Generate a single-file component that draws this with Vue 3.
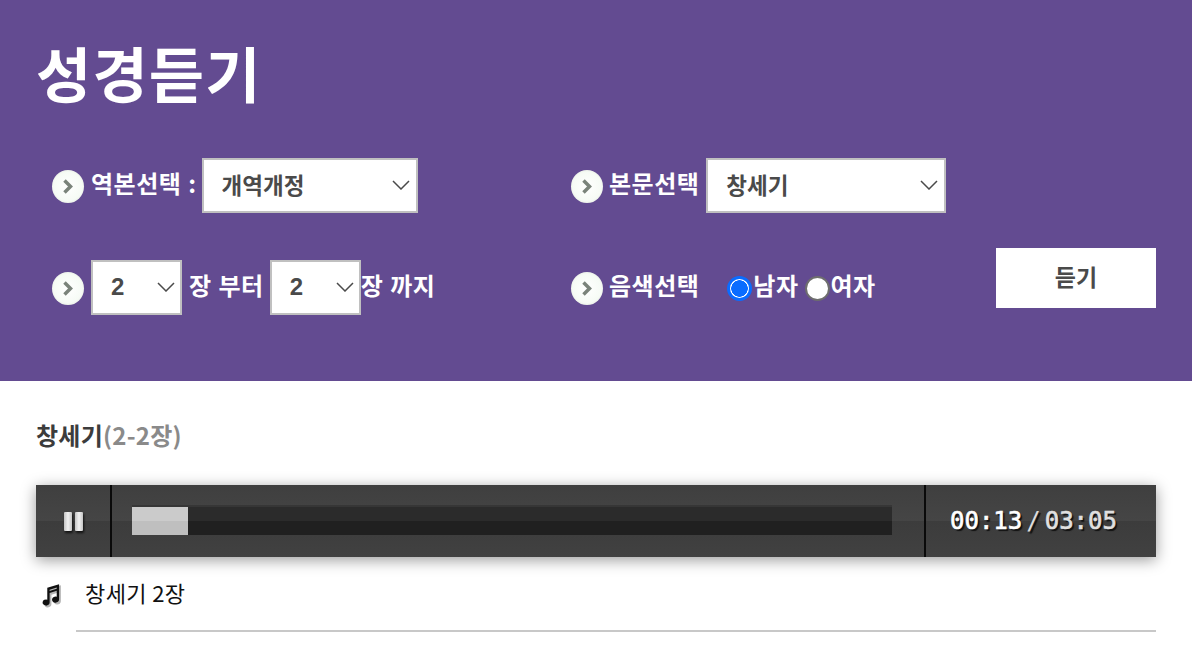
<template>
  <div class="page">
    <section class="search">
      <h1 class="title">성경듣기</h1>
      <div class="form">
        <div class="col col-left">
          <div class="row">
            <span class="bullet"><svg viewBox="0 0 32 32"><path d="M12.500 10l6 6-6 6" /></svg></span>
            <label class="label">역본선택 :</label>
            <div class="select-box version">
              <select><option>개역개정</option></select>
              <svg class="chev" viewBox="0 0 18 10"><path d="M1 1l8 8 8-8" /></svg>
            </div>
          </div>
          <div class="row">
            <span class="bullet"><svg viewBox="0 0 32 32"><path d="M12.500 10l6 6-6 6" /></svg></span>
            <div class="select-box chapter">
              <select><option>2</option></select>
              <svg class="chev" viewBox="0 0 18 10"><path d="M1 1l8 8 8-8" /></svg>
            </div>
            <span class="label from">장 부터</span>
            <div class="select-box chapter">
              <select><option>2</option></select>
              <svg class="chev" viewBox="0 0 18 10"><path d="M1 1l8 8 8-8" /></svg>
            </div>
            <span class="label to">장 까지</span>
          </div>
        </div>
        <div class="col col-right">
          <div class="row">
            <span class="bullet"><svg viewBox="0 0 32 32"><path d="M12.500 10l6 6-6 6" /></svg></span>
            <label class="label">본문선택</label>
            <div class="select-box book">
              <select><option>창세기</option></select>
              <svg class="chev" viewBox="0 0 18 10"><path d="M1 1l8 8 8-8" /></svg>
            </div>
          </div>
          <div class="row">
            <span class="bullet"><svg viewBox="0 0 32 32"><path d="M12.500 10l6 6-6 6" /></svg></span>
            <span class="label">음색선택</span>
            <div class="voices">
              <label v-for="v in voices" :key="v" class="voice">
                <input v-model="voice" type="radio" name="voice" :value="v" />
                <span class="label">{{ v }}</span>
              </label>
            </div>
          </div>
        </div>
        <button class="listen" type="button">듣기</button>
      </div>
    </section>

    <section class="result">
      <h2 class="book-title">창세기<span>(2-2장)</span></h2>
      <div class="player">
        <div class="play-cell">
          <span class="pause"><i></i><i></i></span>
        </div>
        <div class="track-cell">
          <div class="track"><div class="played" :style="{ width: progress + 'px' }"></div></div>
        </div>
        <div class="time-cell">
          <span class="now">00:13</span>
          <span class="slash">/</span>
          <span class="total">03:05</span>
        </div>
      </div>
      <div class="song">
        <svg class="note" viewBox="0 0 20 22">
          <path class="note-shadow" d="M7.500 5l10-3v13.500a3 2.600 0 1 1-2-2.400V8l-6 2v8a3 2.600 0 1 1-2-2.400z" />
          <path d="M6 4l10-3v13a3 2.600 0 1 1-2-2.400V6.500l-6 2v8a3 2.600 0 1 1-2-2.400zM8 5.800v1l6-2v-1z" fill-rule="evenodd" />
        </svg>
        <span>창세기 2장</span>
      </div>
      <div class="song-line"></div>
    </section>
  </div>
</template>

<script setup>
import { ref } from 'vue'

const voices = ['남자', '여자']
const voice = ref('남자')
const progress = 56
</script>

<style>
html,
body {
  margin: 0;
  background: #fff;
}
</style>

<style scoped>
.page {
  font-family: "Noto Sans CJK KR", "Noto Sans", sans-serif;
  color: #000;
  height: 670px;
  overflow: hidden;
}

.search {
  box-sizing: border-box;
  height: 381px;
  background: #634b91;
  padding: 28px 36px 0;
}

.title {
  margin: 0;
  height: 88px;
  font-size: 60px;
  line-height: 88px;
  font-weight: 700;
  letter-spacing: 1.200px;
  color: #fff;
}

.form {
  display: flex;
  position: relative;
  margin-top: 42px;
  padding-left: 15px;
}

.col {
  display: flex;
  flex-direction: column;
  gap: 47px;
}

.col-left {
  width: 519px;
}

.row {
  display: flex;
  align-items: center;
  height: 55px;
}

.bullet {
  width: 32px;
  height: 33px;
  margin: 1px 7px 0 1px;
  flex: none;
  border-radius: 50%;
  background: radial-gradient(circle, #fff 0%, #f6fbf5 62%, #e2e6dd 84%, #a99fc0 100%);
}

.col-right .bullet {
  margin-right: 6px;
}

.bullet svg {
  display: block;
  width: 32px;
  height: 33px;
  filter: blur(0.5px);
}

.bullet path {
  fill: none;
  stroke: #7a837a;
  stroke-width: 3.500;
}

.label {
  font-size: 24px;
  font-weight: 700;
  color: #fff;
  white-space: nowrap;
  letter-spacing: 0.5px;
  word-spacing: 1px;
  margin-top: -6px;
}

.select-box {
  position: relative;
  box-sizing: border-box;
  height: 55px;
  margin-left: 7px;
  background: #fff;
  border: 2px solid #c0c0c0;
}

.select-box select {
  appearance: none;
  display: block;
  width: 100%;
  height: 100%;
  border: 0;
  background: transparent;
  padding: 0 0 3px 18px;
  font: 700 22.500px "Noto Sans CJK KR", sans-serif;
  color: #4a4a4a;
}

.chev {
  position: absolute;
  right: 6px;
  top: 20px;
  width: 18px;
  height: 10px;
  pointer-events: none;
}

.chev path {
  fill: none;
  stroke: #4a4a4a;
  stroke-width: 1.500;
}

.version {
  width: 216px;
  margin-left: 5px;
}

.book {
  width: 240px;
}

.chapter {
  width: 91px;
  margin-left: 0;
}

.chapter .chev {
  right: 5px;
}

.chapter select {
  padding: 0 0 2px 18px;
  font: 700 24px "Liberation Sans", sans-serif;
}

.from {
  margin: -6px 6px 0 7px;
}

.voices {
  display: flex;
  align-items: center;
  margin-left: 28px;
}

.voice {
  display: flex;
  align-items: center;
  margin-right: 6px;
}

.voice input {
  appearance: none;
  box-sizing: border-box;
  width: 25px;
  height: 25px;
  margin: 1px 1px 0 0;
  border-radius: 50%;
  border: 2px solid #6e6e6e;
  background: #fff;
}

.voice input:checked {
  border: 3px solid #0a6cff;
  background: radial-gradient(circle, #0a6cff 0, #0a6cff 8px, #fff 8.500px);
}

.listen {
  position: absolute;
  left: 960px;
  top: 90px;
  width: 160px;
  height: 60px;
  border: 0;
  padding: 0 0 4px;
  background: #fff;
  font: 700 23px "Noto Sans CJK KR", sans-serif;
  color: #4a4a4a;
}

.result {
  padding: 0 36px;
}

.book-title {
  margin: 0;
  height: 104px;
  padding-top: 36px;
  box-sizing: border-box;
  font-size: 24px;
  line-height: 36px;
  font-weight: 700;
  color: #3c3c3c;
  letter-spacing: 0.250px;
}

.book-title span {
  color: #8a8a8a;
}

.player {
  display: flex;
  height: 72px;
  background: linear-gradient(#3f3f3f 0, #454545 50%, #3c3c3c 50%, #414141 100%);
  box-shadow: 0 3px 14px rgba(0, 0, 0, 0.4);
}

.play-cell {
  width: 74px;
  display: flex;
  align-items: center;
  justify-content: center;
  border-right: 2px solid #0a0a0a;
}

.pause {
  display: flex;
  gap: 3px;
  filter: drop-shadow(1px 2px 1px rgba(0, 0, 0, 0.7));
}

.pause i {
  display: block;
  width: 8px;
  height: 19px;
  border-radius: 1px;
  background: linear-gradient(90deg, #c4c4c4, #f2f2f2 50%, #c4c4c4);
}

.track-cell {
  box-sizing: border-box;
  width: 814px;
  padding: 22px 0 0 20px;
  border-right: 2px solid #0a0a0a;
}

.track {
  width: 760px;
  height: 28px;
  background: linear-gradient(#2b2b2b 50%, #202020 50%);
  box-shadow: 0 -2px 0 #363636;
}

.played {
  height: 28px;
  background: linear-gradient(#cbcbcb 50%, #bfbfbf 50%);
}

.time-cell {
  flex: 1;
  display: flex;
  align-items: center;
  padding-left: 24px;
  font-family: "DejaVu Sans Mono", monospace;
  font-size: 24px;
  font-weight: 400;
  -webkit-text-stroke: 0.6px currentColor;
  color: #fff;
  text-shadow: 2px 2px 1px #111;
}

.slash {
  margin: 0 4px;
  color: #ddd;
  -webkit-text-stroke: 0;
}

.total {
  color: #e0e0e0;
}

.song {
  display: flex;
  align-items: center;
  height: 73px;
  font-size: 22px;
  font-weight: 400;
  color: #111;
  letter-spacing: 0.4px;
}

.song > span {
  margin-top: -4px;
}

.note {
  width: 24px;
  height: 26px;
  margin: 4px 21px 0 4px;
  flex: none;
}

.note path {
  fill: #111;
}

.note .note-shadow {
  fill: #b5b5b5;
}

.song-line {
  height: 2px;
  margin-left: 40px;
  background: #c8c8c8;
}
</style>
